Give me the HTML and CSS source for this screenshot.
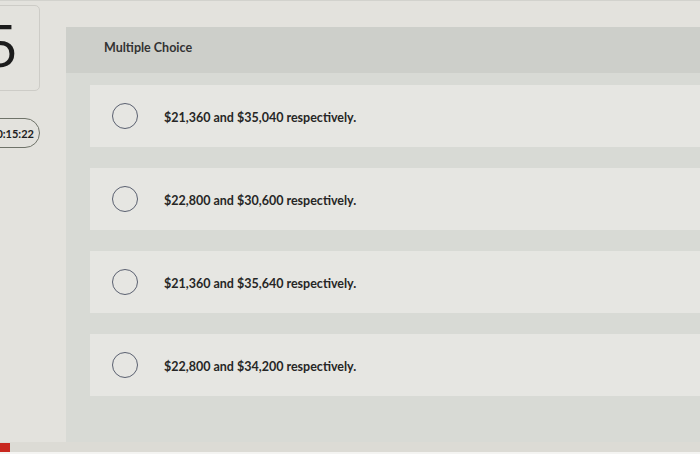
FILE: index.html
```html
<!DOCTYPE html>
<html lang="en">
<head>
    <meta charset="UTF-8">
    <meta name="viewport" content="width=device-width, initial-scale=1.0">
    <title>Multiple Choice</title>
    <link rel="stylesheet" href="styles.css">
</head>
<body>
    <div id="page">
        <div id="side">
            <div class="question-number">5</div>
            <div class="timer">00:15:22</div>
        </div>

        <div id="question">
            <div class="question-header">Multiple Choice</div>
            <div class="choices">
                <label class="choice">
                    <span class="radio"></span>
                    <span class="choice-text">$21,360 and $35,040 respectively.</span>
                </label>
                <label class="choice">
                    <span class="radio"></span>
                    <span class="choice-text">$22,800 and $30,600 respectively.</span>
                </label>
                <label class="choice">
                    <span class="radio"></span>
                    <span class="choice-text">$21,360 and $35,640 respectively.</span>
                </label>
                <label class="choice">
                    <span class="radio"></span>
                    <span class="choice-text">$22,800 and $34,200 respectively.</span>
                </label>
            </div>
        </div>
    </div>
    <div id="footer"><span class="flag"></span></div>
</body>
</html>
```

FILE: styles.css
```css
body {
    margin: 0;
    padding: 0;
    width: 700px;
    height: 454px;
    overflow: hidden;
    background-color: #e3e2dd;
    font-family: Lato, "Open Sans", Arial, sans-serif;
    color: #2b2b2b;
    display: flex;
    flex-direction: column;
}

#page {
    flex: 1;
    display: flex;
    padding-top: 4px;
    border-top: 1px solid #d2d2cd;
    overflow: hidden;
}

/* left column: number + timer (cut off by the photo) */
#side {
    width: 66px;
    flex-shrink: 0;
    display: flex;
    flex-direction: column;
}

.question-number {
    width: 78px;
    height: 86px;
    margin-left: -38px;
    box-sizing: border-box;
    border: 1px solid #cdccc7;
    border-radius: 5px;
    font-family: "Open Sans", Lato, sans-serif;
    font-size: 58px;
    font-weight: 500;
    color: #1c1c1c;
    display: flex;
    align-items: center;
    justify-content: center;
    line-height: 1;
    padding-bottom: 6px;
}

.timer {
    width: 56px;
    height: 30px;
    margin-left: -16px;
    margin-top: 27px;
    box-sizing: border-box;
    border: 1.5px solid #6f7369;
    border-radius: 15px;
    font-size: 11px;
    font-weight: 700;
    color: #202020;
    display: flex;
    align-items: center;
    justify-content: center;
}

#question {
    flex: 1;
    margin-top: 22px;
    background-color: #d8dad5;
    display: flex;
    flex-direction: column;
}

.question-header {
    height: 46px;
    padding-left: 38px;
    background-color: #cdcfca;
    font-size: 12.5px;
    font-weight: 700;
    color: #333;
    display: flex;
    align-items: center;
    padding-bottom: 6px;
    box-sizing: border-box;
}

.choices {
    padding: 12px 0 0 24px;
    display: flex;
    flex-direction: column;
    gap: 21px;
}

.choice {
    height: 62px;
    background-color: #e6e6e2;
    display: flex;
    align-items: center;
    padding-left: 22px;
}

.radio {
    width: 24px;
    height: 24px;
    border: 1.5px solid #5a6070;
    border-radius: 50%;
    flex-shrink: 0;
}

.choice-text {
    margin-left: 26px;
    font-size: 12.5px;
    font-weight: 700;
    color: #262626;
    margin-top: 3px;
}

#footer {
    height: 10px;
    background-color: #dcdbd5;
    border-bottom: 2px solid #f4f4f2;
    position: relative;
}

.flag {
    position: absolute;
    left: 0;
    top: 1px;
    width: 10px;
    height: 9px;
    background-color: #c8281f;
}
```
